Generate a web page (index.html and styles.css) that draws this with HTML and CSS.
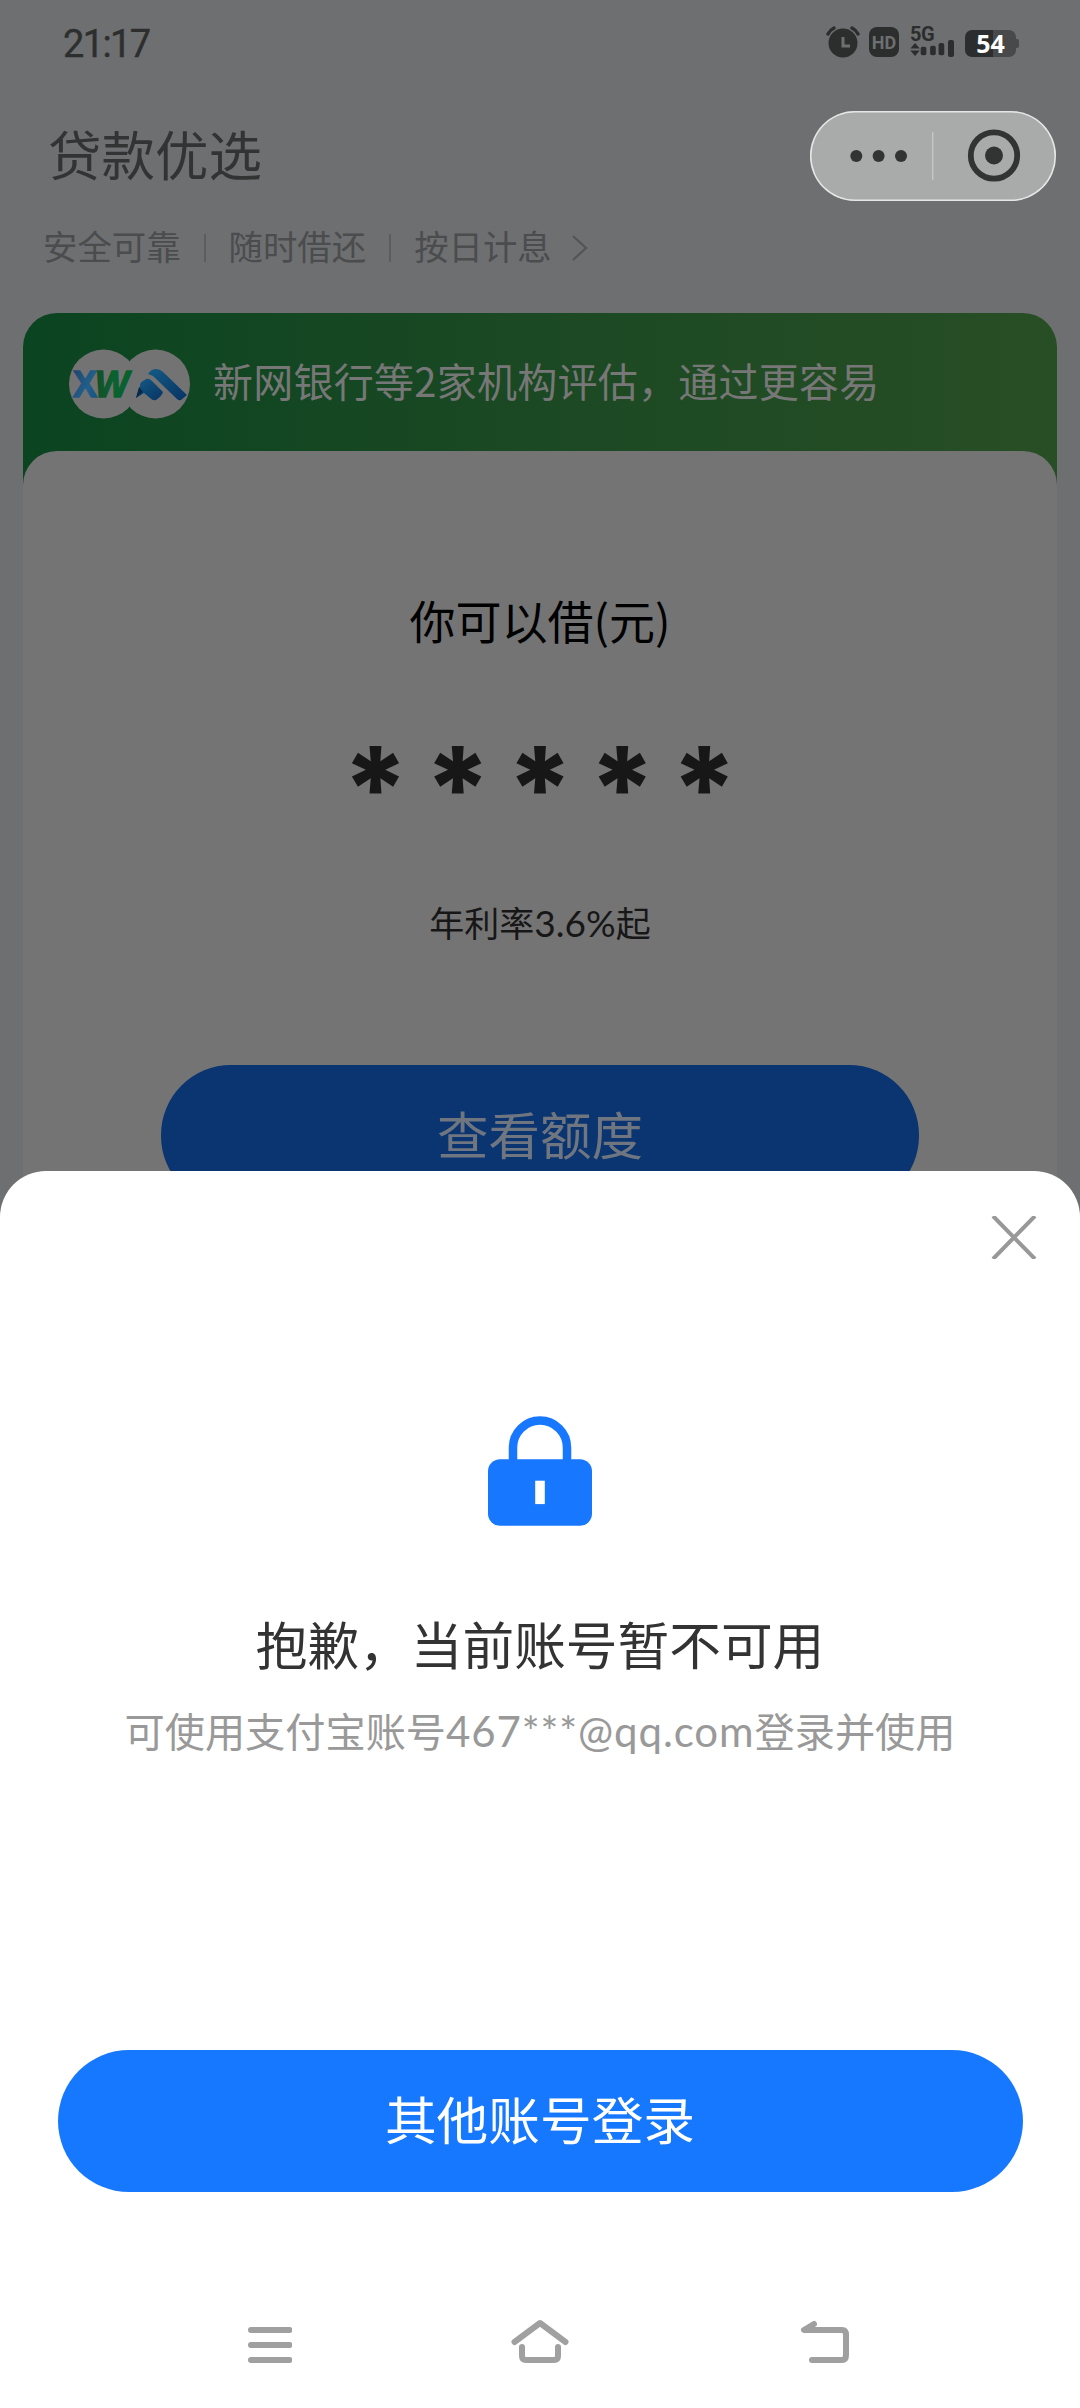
FILE: index.html
```html
<!DOCTYPE html>
<html lang="zh-CN">
<head>
<meta charset="utf-8">
<title>贷款优选</title>
<link rel="stylesheet" href="styles.css">
</head>
<body>
<div class="screen">
  <main class="page">
    <div class="status">
      <span class="time">21:17</span>
      <div class="status-icons">
        <svg class="alarm" width="34" height="32" viewBox="0 0 34 32">
          <circle cx="17" cy="17" r="14.5" fill="#2c2d2d"/>
          <path d="M2 8Q4 4 8 2M32 8Q30 4 26 2" fill="none" stroke="#2c2d2d" stroke-width="3.4" stroke-linecap="round"/>
          <path d="M17 11v9h7" fill="none" stroke="#6e6f71" stroke-width="3"/>
        </svg>
        <span class="hd">HD</span>
        <div class="signal">
          <span class="net">5G</span>
          <svg width="46" height="17" viewBox="0 0 46 17">
            <g fill="#2c2d2d">
              <path d="M0 7L5 1l5 6zM0 9h10l-5 6z"/>
              <rect x="11" y="5" width="6" height="9" rx="2"/>
              <rect x="21" y="4" width="6" height="10" rx="2"/>
              <rect x="30" y="1" width="6" height="13" rx="2"/>
            </g>
          </svg>
          <i class="bar"></i>
        </div>
        <div class="battery"><span>54</span></div>
      </div>
    </div>

    <header class="header">
      <h1>贷款优选</h1>
      <div class="capsule">
        <svg width="246" height="90" viewBox="0 0 246 90">
          <g fill="#323333"><circle cx="46.3" cy="45" r="6"/><circle cx="68.6" cy="45" r="6"/><circle cx="91" cy="45" r="6"/><circle cx="184" cy="44.5" r="9"/></g>
          <path d="M122.7 21v48" stroke="#c4c5c5" stroke-width="1.5"/>
          <circle cx="184" cy="44.5" r="23.2" fill="none" stroke="#323333" stroke-width="5.8"/>
        </svg>
      </div>
    </header>

    <div class="features">
      <span>安全可靠</span><i></i><span>随时借还</span><i></i><span>按日计息</span>
      <svg width="16" height="28" viewBox="0 0 16 28"><path d="M1 2L14 14L1 26" fill="none" stroke="#535455" stroke-width="2.200"/></svg>
    </div>

    <section class="offer">
      <div class="banner">
        <svg width="122" height="70" viewBox="0 0 122 70">
          <defs>
            <linearGradient id="x" x1="0" y1="0" x2="1" y2="1"><stop offset="0" stop-color="#1d4268"/><stop offset=".6" stop-color="#225f8c"/><stop offset="1" stop-color="#14507c"/></linearGradient>
            <linearGradient id="w" x1="0" x2="1"><stop offset="0" stop-color="#164d28"/><stop offset=".5" stop-color="#0a6230"/><stop offset="1" stop-color="#08602d"/></linearGradient>
            <linearGradient id="b" x1="0" y1="0" x2="1" y2="1"><stop offset="0" stop-color="#145a85"/><stop offset="1" stop-color="#073463"/></linearGradient>
          </defs>
          <circle cx="34.500" cy="35" r="34.500" fill="#747374"/><circle cx="86.500" cy="35" r="34.500" fill="#747374"/>
          <g class="brand"><text class="brand-x" x="4" y="48" fill="url(#x)" stroke="url(#x)">X</text><text x="26" y="48" fill="url(#w)" stroke="url(#w)">W</text></g>
          <path d="M67 49l4-12q0-4 3-5l3-2q3-1 6 2l11 11q-1 4-7 8-3 1-6-2l-6-5z" fill="url(#b)"/>
          <path d="M79 25q3-5 8-5 4 0 7 3l24 23-6 5q-2 1-4-1L84 27z" fill="url(#b)"/>
          <path d="M67 49l3-11 4 5z" fill="#092849"/>
        </svg>
        <p>新网银行等2家机构评估，通过更容易</p>
      </div>
      <div class="quota">
        <div class="quota-title">你可以借(元)</div>
        <div class="stars"><b>*</b><b>*</b><b>*</b><b>*</b><b>*</b></div>
        <div class="rate">年利率<span>3.6%</span>起</div>
        <div class="check">查看额度</div>
      </div>
    </section>
  </main>

  <section class="sheet">
    <svg class="close" width="46" height="43" viewBox="0 0 46 43"><path d="M2 0L44 43M44 0L2 43" stroke="#989898" stroke-width="4"/></svg>
    <svg class="lock" width="104" height="110" viewBox="0 0 104 110">
      <path d="M25 46V31.500a27 27 0 0 1 54 0V46" fill="none" stroke="#1777ff" stroke-width="8.500"/>
      <rect y="43.300" width="104" height="66.500" rx="12" fill="#1777ff"/>
      <rect x="47.200" y="64.700" width="9.600" height="23.400" fill="#fff"/>
    </svg>
    <h2>抱歉，当前账号暂不可用</h2>
    <p class="hint">可使用支付宝账号<span>467***@qq.com</span>登录并使用</p>
    <div class="login">其他账号登录</div>
    <nav class="nav">
      <svg width="62" height="50" viewBox="0 0 62 50"><path d="M21 12h38.500M21 27h38.500M21 42h38.500"/></svg>
      <svg width="64" height="50" viewBox="0 0 64 50"><path d="M6.500 24L32 5L57.500 24M14 29v9q0 4 4 4h28q4 0 4-4v-9"/></svg>
      <svg width="62" height="50" viewBox="0 0 62 50"><path d="M26 6L16 12H54q4 0 4 5v20q0 5-4 5H24"/></svg>
    </nav>
  </section>
</div>
</body>
</html>
```
FILE: styles.css
```css
* { box-sizing: border-box; }
body { margin: 0; font-family: "Noto Sans CJK SC", sans-serif; }
h1, h2, p { margin: 0; font-weight: 400; }
svg { display: block; }
.screen { position: relative; width: 1080px; height: 2408px; overflow: hidden; background: #fff; }
.page { height: 1240px; overflow: hidden; background: #6e6f71; }

.status { height: 84px; padding: 0 64px 0 63px; display: flex; justify-content: space-between; }
.time { font: 400 38px/44px Roboto, sans-serif; letter-spacing: -1.600px; color: #2d2e2e; margin-top: 22px; -webkit-text-stroke: .4px #2d2e2e; }
.status-icons { display: flex; align-items: flex-start; padding-top: 26px; }
.alarm { margin-right: 9px; }
.hd { width: 30px; height: 30px; margin: 1px 10px 0 0; border-radius: 8px; background: #2c2d2d; color: #6e6f71; font: 700 18px/31px Roboto, sans-serif; text-align: center; }
.signal { position: relative; width: 46px; height: 32px; margin-right: 10px; display: flex; flex-direction: column; }
.net { font: 700 20px/16px Roboto, sans-serif; color: #2c2d2d; height: 17px; padding-left: 1px; letter-spacing: -.5px; }
.bar { position: absolute; right: 1px; top: 14px; width: 6px; height: 17px; border-radius: 2px; background: #2c2d2d; }
.battery { position: relative; width: 51px; height: 27px; margin-top: 4px; border-radius: 7px; background: linear-gradient(90deg, #2c2d2e 55%, #48494b 55%); color: #fff; text-align: center; font: 700 25px/26px "Open Sans", sans-serif; }
.battery::after { content: ""; position: absolute; left: 51px; top: 9px; width: 3px; height: 9px; border-radius: 0 2px 2px 0; background: #48494b; }

.header { height: 134px; padding: 27px 24px 0 48px; display: flex; justify-content: space-between; align-items: flex-start; }
h1 { font-size: 53.5px; line-height: 84px; color: #323333; }
.capsule { width: 246px; height: 90px; border-radius: 45px; background: #a9abaa; box-shadow: inset 0 0 0 1.5px #e5e6e6; }

.features { height: 95px; padding: 9px 0 0 43px; display: flex; align-items: flex-start; font-size: 34.4px; line-height: 36px; color: #4b4c4d; }
.features i { width: 2px; height: 28px; margin: 7px 23px 0 23px; background: #5c5d5e; }
.features svg { margin: 7px 0 0 20px; }

.offer { width: 1034px; margin-left: 23px; border-radius: 34px 34px 0 0; background: linear-gradient(90deg, #0b4421, #1b4923 50%, #284e25); }
.banner { height: 138px; padding-left: 46px; display: flex; align-items: center; }
.banner svg { margin-top: 4px; }
.brand { font: 700 italic 36px "Liberation Sans", sans-serif; stroke-width: 1.5px; }
.brand-x { font-style: normal; }
.banner p { margin-left: 22px; font-size: 40px; line-height: 60px; margin-top: -4px; color: #777; letter-spacing: .25px; }
.quota { height: 800px; border-radius: 34px 34px 0 0; background: #747474; display: flex; flex-direction: column; align-items: center; padding-top: 133px; }
.quota-title { font-size: 46px; line-height: 70px; color: #000; }
.stars { display: flex; margin-top: 67px; height: 96px; }
.stars b { width: 82.200px; text-align: center; font: 800 116px/134px Inter, sans-serif; color: #171717; }
.rate { margin-top: 60px; font-size: 35px; line-height: 90px; color: #171717; }
.rate span { font-family: Lato, sans-serif; font-size: 37px; }
.check { width: 758px; height: 141px; border-radius: 70px; background: #0a3571; color: #6f7680; font-size: 51.500px; line-height: 136px; text-align: center; margin-top: 97px; }

.sheet { position: absolute; left: 0; right: 0; top: 1171px; bottom: 0; border-radius: 46px 46px 0 0; background: #fff; display: flex; flex-direction: column; align-items: center; padding-top: 45px; }
.close { align-self: flex-end; margin-right: 43px; }
.lock { margin-top: 157px; }
h2 { margin-top: 77px; font-size: 51.700px; line-height: 80px; color: #333; }
.hint { margin-top: 14px; font-size: 40.200px; line-height: 66px; color: #999; }
.hint span { font-family: Lato, sans-serif; font-size: 42px; letter-spacing: .9px; }
.login { width: 965px; height: 142px; margin-top: 286px; border-radius: 71px; background: #1677ff; color: #fff; font-size: 51.700px; line-height: 135px; text-align: center; }
.nav { width: 620px; margin-top: 126px; display: flex; justify-content: space-between; }
.nav svg { fill: none; stroke: #a0a0a0; stroke-width: 6; stroke-linecap: round; stroke-linejoin: round; }
```
